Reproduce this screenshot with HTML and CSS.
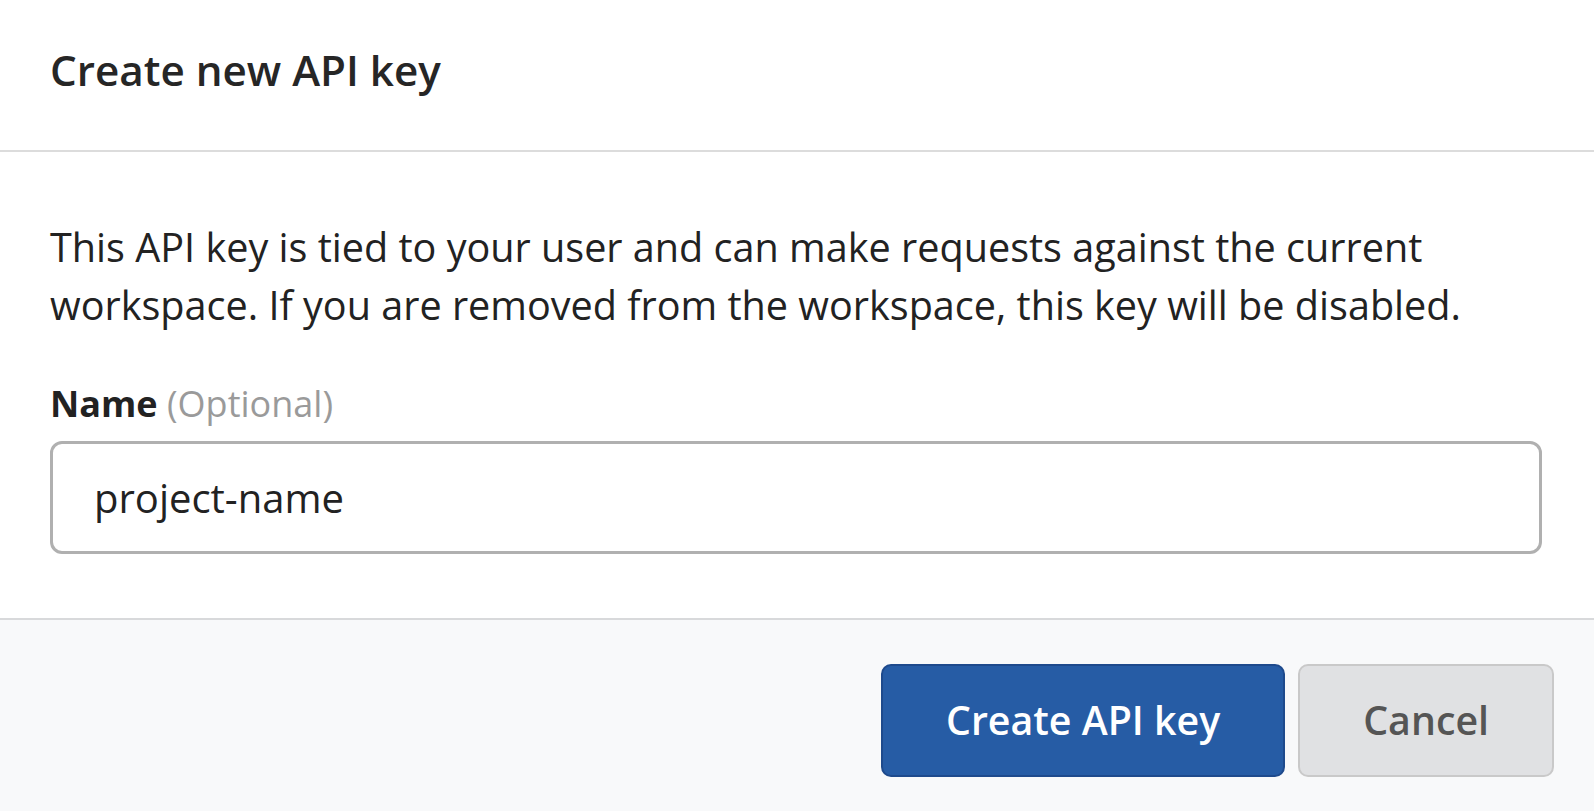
FILE: index.html
```html
<!DOCTYPE html>
<html lang="en">
<head>
  <meta charset="UTF-8">
  <meta name="viewport" content="width=device-width, initial-scale=1.0">
  <title>Create new API key</title>
  <link rel="stylesheet" href="styles.css">
</head>
<body>
  <div class="dialog">
    <div class="dialog-header">
      <h2 class="dialog-title">Create new API key</h2>
    </div>
    <div class="dialog-body">
      <p class="dialog-text">This API key is tied to your user and can make requests against the current workspace. If you are removed from the workspace, this key will be disabled.</p>
      <label class="field-label" for="key-name">Name <span class="optional">(Optional)</span></label>
      <input class="field-input" id="key-name" type="text" value="project-name">
    </div>
    <div class="dialog-footer">
      <button class="button button-primary">Create API key</button>
      <button class="button button-secondary">Cancel</button>
    </div>
  </div>
</body>
</html>
```

FILE: styles.css
```css
html, body {
  height: 100%;
}

body {
  margin: 0;
  background: white;
  font-family: "Open Sans", "Noto Sans", sans-serif;
  color: #222;
}

.dialog {
  display: flex;
  flex-direction: column;
  min-height: 100%;
}

.dialog-header {
  padding: 42px 50px 52px;
  border-bottom: 2px solid #dcdcdc;
}

.dialog-title {
  margin: 0;
  font-size: 42.2px;
  font-weight: 600;
  line-height: 56px;
  color: #262626;
}

.dialog-body {
  display: flex;
  flex-direction: column;
  padding: 66px 52px 64px 50px;
}

.dialog-text {
  margin: 0 0 45px;
  font-size: 39.6px;
  line-height: 58px;
}

.field-label {
  font-size: 36px;
  font-weight: 700;
  line-height: 50px;
  margin-bottom: 12px;
}

.optional {
  font-weight: 400;
  color: #9a9a9a;
}

.field-input {
  height: 113px;
  box-sizing: border-box;
  padding: 0 41px;
  border: 3px solid #b0b0b0;
  border-radius: 12px;
  font-family: inherit;
  font-size: 40px;
  color: #222;
  outline: none;
}

.dialog-footer {
  flex: 1;
  display: flex;
  justify-content: flex-end;
  align-items: flex-start;
  gap: 13px;
  padding: 44px 40px 40px;
  background: #f8f9fa;
  border-top: 2px solid #d8d9db;
}

.button {
  font-family: inherit;
  font-size: 39.3px;
  font-weight: 600;
  line-height: 53px;
  padding: 28px 63px;
  border-radius: 10px;
  cursor: pointer;
}

.button-primary {
  background: #265ca5;
  border: 2px solid #1e4a8c;
  color: white;
}

.button-secondary {
  background: #e0e1e3;
  border: 2px solid #c9c9c9;
  color: #555;
}
```
